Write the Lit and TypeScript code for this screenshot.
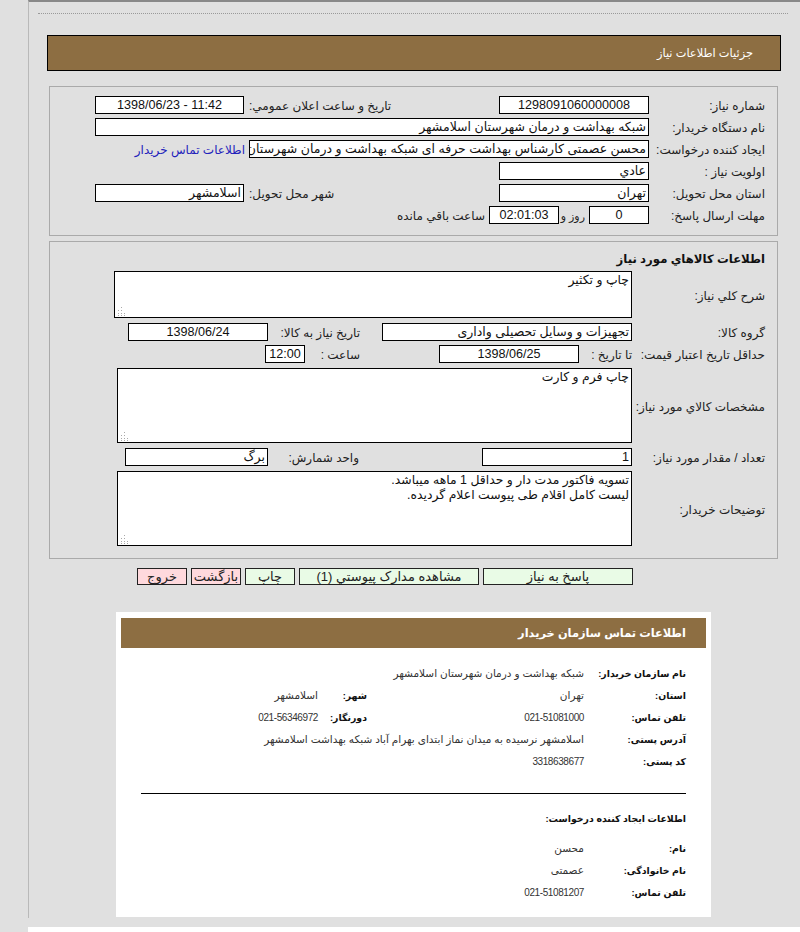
import { LitElement, html, css } from "lit";
import { customElement } from "lit/decorators.js";

const grip = html`<svg class="grip" width="9" height="9" viewBox="0 0 9 9" aria-hidden="true">
  <g fill="#a9a9a9"><rect x="4" y="0" width="1" height="1"/><rect x="4" y="3" width="1" height="1"/><rect x="1" y="3" width="1" height="1"/><rect x="7" y="6" width="1" height="1"/><rect x="4" y="6" width="1" height="1"/><rect x="1" y="6" width="1" height="1"/><rect x="7" y="8" width="1" height="1"/><rect x="4" y="8" width="1" height="1"/><rect x="1" y="8" width="1" height="1"/></g>
</svg>`;

@customElement("app-root")
export class AppRoot extends LitElement {
  static styles = css`
    :host {
      display: block;
      width: 800px;
      height: 932px;
      overflow: hidden;
      background: #e0e0e0;
      font-family: "Liberation Sans", "DejaVu Sans", sans-serif;
      font-size: 12px;
      color: #222;
    }
    .page {
      margin-left: 28px;
      height: 916px;
      border-left: 1px solid #b9b9b9;
      border-top: 2px solid #888;
      display: flex;
      flex-direction: column;
    }
    .page > * { flex: none; }
    .dots {
      margin: 11px 12px 0 9px;
      border-top: 1px dotted #999;
    }
    .title-bar {
      margin: 21px 19px 0 18px;
      height: 34px;
      border: 1px solid #000;
      background: #8d6e42;
      color: #fff;
      direction: rtl;
      display: flex;
      align-items: center;
      padding-right: 27px;
      font-size: 11.4px;
    }
    .panel {
      margin-left: 20px;
      margin-right: 22px;
      border: 1px solid #aaa;
      direction: rtl;
      display: flex;
      flex-direction: column;
      box-sizing: border-box;
    }
    .p1 { margin-top: 15px; height: 150px; padding-top: 9px; gap: 4px; }
    .p2 { margin-top: 5px; height: 318px; padding-top: 9px; gap: 5px; }
    .row { display: grid; height: 18px; align-items: center; }
    .lbl { padding-right: 12px; padding-top: 2px; white-space: nowrap; }
    .plain { padding-top: 2px; white-space: nowrap; }
    .end { text-align: left; padding-left: 5px; padding-top: 2px; white-space: nowrap; }
    .a1 { grid-template-columns: 128px 150px 105px 150px 149px; }
    .a2 { grid-template-columns: 128px 554px; }
    .a3 { grid-template-columns: 128px 400px auto; }
    .a4 { grid-template-columns: 128px 150px; }
    .a6 { grid-template-columns: 128px 60px 30px 70px auto; }
    .b1 { grid-template-columns: 145px 518px; height: 47px; }
    .b2 { grid-template-columns: 145px 250px 22px 92px 140px; }
    .b3 { grid-template-columns: 145px 53px 140px 79px 55px 40px; margin-top: -1px; }
    .b4 { grid-template-columns: 145px 515px; height: 75px; }
    .b5 { grid-template-columns: 145px 150px 123px 91px 143px; }
    .b1 .lbl, .b4 .lbl { padding-top: 3px; }
    .f {
      box-sizing: border-box;
      height: 18px;
      border: 1px solid #000;
      background: #fff;
      color: #111;
      padding: 1px 2px 0;
      line-height: 15px;
      white-space: nowrap;
      overflow: hidden;
      font-size: 12.5px;
    }
    .num { font-size: 12.6px; }
    .c { text-align: center; }
    .ta {
      position: relative;
      box-sizing: border-box;
      height: 100%;
      border: 1px solid #000;
      background: #fff;
      color: #111;
      padding: 1px 2px 0;
      line-height: 15px;
      font-size: 12.4px;
    }
    .grip { position: absolute; left: 2px; bottom: 1px; }
    .link { color: #2222bb; padding-right: 4px; padding-top: 2px; white-space: nowrap; }
    .sec { font-weight: 700; font-size: 11.7px; height: 16px; line-height: 16px; padding-right: 12px; margin-bottom: -1px; color: #111; }
    .t-gap { padding-right: 4px; font-size: 11px; }
    .t-tail { padding-right: 4px; padding-top: 2px; white-space: nowrap; }
    .buttons {
      margin-top: 9px;
      height: 17px;
      margin-left: 108px;
      width: 496px;
      direction: rtl;
      display: flex;
      gap: 4px;
    }
    .btn {
      box-sizing: border-box;
      height: 17px;
      border: 1px solid #222;
      background: #e9fbe6;
      color: #222;
      text-align: center;
      line-height: 15px;
      font-size: 13px;
      white-space: nowrap;
      overflow: hidden;
    }
    .w150 { width: 150px; }
    .w180 { width: 180px; }
    .w50 { width: 50px; }
    .red { background: #ffd9dd; }
    .card {
      margin-top: 27px;
      margin-left: 87px;
      width: 595px;
      height: 305px;
      box-sizing: border-box;
      background: #fff;
      padding: 6px 5px 0;
      direction: rtl;
      display: flex;
      flex-direction: column;
      font-size: 10.5px;
    }
    .card-head {
      height: 30px;
      background: #8d6e42;
      color: #fff;
      font-weight: 700;
      font-size: 11.4px;
      display: flex;
      align-items: center;
      padding-right: 20px;
    }
    .card-body { padding: 14px 20px 0; display: flex; flex-direction: column; }
    .cr {
      display: grid;
      height: 22px;
      align-items: center;
      grid-template-columns: 102px 217px 49px auto;
      color: #333;
      white-space: nowrap;
    }
    .k { font-weight: 700; color: #111; font-size: 9.4px; }
    .n { font-size: 10px; letter-spacing: -0.4px; }
    .rule { height: 0; border-top: 1px solid #000; margin: 21px 0 0; }
    .sub { font-weight: 700; color: #111; font-size: 9.4px; margin-top: 17px; height: 16px; line-height: 16px; margin-bottom: 10px; }
    .white-band {
      margin-left: 28px;
      margin-top: 9px;
      height: 5px;
      background: #fff;
    }
  `;

  render() {
    return html`
      <div class="page">
        <div class="dots"></div>
        <div class="title-bar">جزئيات اطلاعات نياز</div>

        <section class="panel p1">
          <div class="row a1">
            <div class="lbl">شماره نياز:</div>
            <div class="f num c">1298091060000008</div>
            <div></div>
            <div class="end">تاريخ و ساعت اعلان عمومي:</div>
            <div class="f num c" dir="ltr">1398/06/23 - 11:42</div>
          </div>
          <div class="row a2">
            <div class="lbl">نام دستگاه خريدار:</div>
            <div class="f">شبکه بهداشت و درمان شهرستان اسلامشهر</div>
          </div>
          <div class="row a3">
            <div class="lbl">ايجاد کننده درخواست:</div>
            <div class="f">محسن عصمتی کارشناس بهداشت حرفه ای شبکه بهداشت و درمان شهرستان اسلامشهر</div>
            <a class="link">اطلاعات تماس خريدار</a>
          </div>
          <div class="row a4">
            <div class="lbl">اولويت نياز :</div>
            <div class="f">عادي</div>
          </div>
          <div class="row a1">
            <div class="lbl">استان محل تحويل:</div>
            <div class="f">تهران</div>
            <div></div>
            <div class="end">شهر محل تحويل:</div>
            <div class="f">اسلامشهر</div>
          </div>
          <div class="row a6">
            <div class="lbl">مهلت ارسال پاسخ:</div>
            <div class="f num c">0</div>
            <div class="plain t-gap">روز و</div>
            <div class="f num c">02:01:03</div>
            <div class="t-tail">ساعت باقي مانده</div>
          </div>
        </section>

        <section class="panel p2">
          <div class="sec">اطلاعات كالاهاي مورد نياز</div>
          <div class="row b1">
            <div class="lbl">شرح کلي نياز:</div>
            <div class="ta">چاپ و تکثیر${grip}</div>
          </div>
          <div class="row b2">
            <div class="lbl">گروه کالا:</div>
            <div class="f">تجهیزات و وسایل تحصیلی واداری</div>
            <div></div>
            <div class="plain">تاريخ نياز به کالا:</div>
            <div class="f num c">1398/06/24</div>
          </div>
          <div class="row b3">
            <div class="lbl">حداقل تاريخ اعتبار قيمت:</div>
            <div class="plain">تا تاريخ :</div>
            <div class="f num c">1398/06/25</div>
            <div></div>
            <div class="plain">ساعت :</div>
            <div class="f num c">12:00</div>
          </div>
          <div class="row b4">
            <div class="lbl">مشخصات کالاي مورد نياز:</div>
            <div class="ta">چاپ فرم و کارت${grip}</div>
          </div>
          <div class="row b5">
            <div class="lbl">تعداد / مقدار مورد نياز:</div>
            <div class="f num">1</div>
            <div></div>
            <div class="plain">واحد شمارش:</div>
            <div class="f">برگ</div>
          </div>
          <div class="row b4">
            <div class="lbl">توضيحات خريدار:</div>
            <div class="ta">تسویه فاکتور مدت دار و حداقل 1 ماهه میباشد.<br />لیست کامل اقلام طی پیوست اعلام گردیده.${grip}</div>
          </div>
        </section>

        <div class="buttons">
          <div class="btn w150">پاسخ به نياز</div>
          <div class="btn w180">مشاهده مدارک پيوستي (1)</div>
          <div class="btn w50">چاپ</div>
          <div class="btn w50 red">بازگشت</div>
          <div class="btn w50 red">خروج</div>
        </div>

        <section class="card">
          <div class="card-head">اطلاعات تماس سازمان خريدار</div>
          <div class="card-body">
            <div class="cr"><div class="k">نام سازمان خريدار:</div><div>شبکه بهداشت و درمان شهرستان اسلامشهر</div></div>
            <div class="cr"><div class="k">استان:</div><div>تهران</div><div class="k">شهر:</div><div>اسلامشهر</div></div>
            <div class="cr"><div class="k">تلفن تماس:</div><div class="n">021-51081000</div><div class="k">دورنگار:</div><div class="n">021-56346972</div></div>
            <div class="cr"><div class="k">آدرس پستی:</div><div>اسلامشهر نرسیده به میدان نماز ابتدای بهرام آباد شبکه بهداشت اسلامشهر</div></div>
            <div class="cr"><div class="k">کد پستی:</div><div class="n">3318638677</div></div>
            <div class="rule"></div>
            <div class="sub">اطلاعات ایجاد کننده درخواست:</div>
            <div class="cr"><div class="k">نام:</div><div>محسن</div></div>
            <div class="cr"><div class="k">نام خانوادگی:</div><div>عصمتی</div></div>
            <div class="cr"><div class="k">تلفن تماس:</div><div class="n">021-51081207</div></div>
          </div>
        </section>
      </div>
      <div class="white-band"></div>
    `;
  }
}
